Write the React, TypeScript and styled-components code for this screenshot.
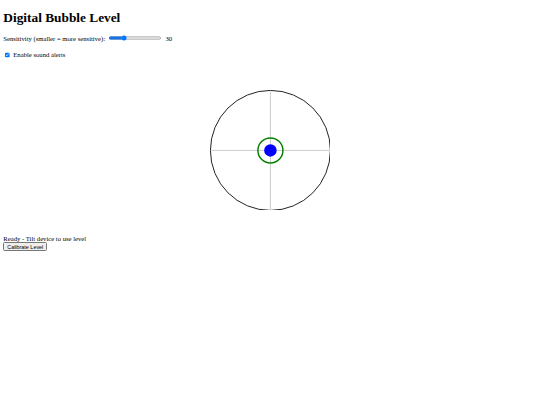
import styled, { createGlobalStyle } from 'styled-components';

const GlobalStyle = createGlobalStyle`
	html {
		zoom: 0.4167;
	}
	body {
		margin: 8px;
		font-family: "Liberation Serif", "Times New Roman", serif;
		font-size: 16px;
		color: #000;
		background: #fff;
	}
`;

const Title = styled.h1`
	font-size: 32px;
	font-weight: bold;
	margin: 16px 0 19px;
`;

const Control = styled.div`
	display: flex;
	align-items: center;
	gap: 6px;
	margin-bottom: 22px;
`;

const CheckRow = styled.label`
	display: flex;
	align-items: center;
	gap: 4px;

	input {
		margin: 0 4px 0 3px;
	}
`;

const LevelWrap = styled.div`
	display: flex;
	justify-content: center;
	margin: 75px 0 58px;
`;

const Status = styled.div`
	line-height: 18px;
`;

const CalButton = styled.button`
	font-family: "Liberation Sans", Arial, sans-serif;
	font-size: 13px;
	padding: 1px 7px;
`;

function Level() {
	return (
		<svg width="290" height="290" viewBox="0 0 290 290">
			<circle cx="145" cy="145" r="144" fill="#fff" stroke="#222" strokeWidth="2.4" />
			<line x1="145" y1="2" x2="145" y2="288" stroke="#ccc" strokeWidth="2.4" />
			<line x1="2" y1="145" x2="288" y2="145" stroke="#ccc" strokeWidth="2.4" />
			<circle cx="145" cy="145" r="30" fill="none" stroke="green" strokeWidth="3.5" />
			<circle cx="145" cy="145" r="15" fill="blue" />
		</svg>
	);
}

export default function App() {
	return (
		<>
			<GlobalStyle />
			<Title>Digital Bubble Level</Title>
			<Control>
				Sensitivity (smaller = more sensitive):
				<input type="range" min={5} max={100} defaultValue={30} />
				<span>30</span>
			</Control>
			<CheckRow>
				<input type="checkbox" defaultChecked />
				Enable sound alerts
			</CheckRow>
			<LevelWrap>
				<Level />
			</LevelWrap>
			<Status>Ready - Tilt device to use level</Status>
			<CalButton>Calibrate Level</CalButton>
		</>
	);
}
